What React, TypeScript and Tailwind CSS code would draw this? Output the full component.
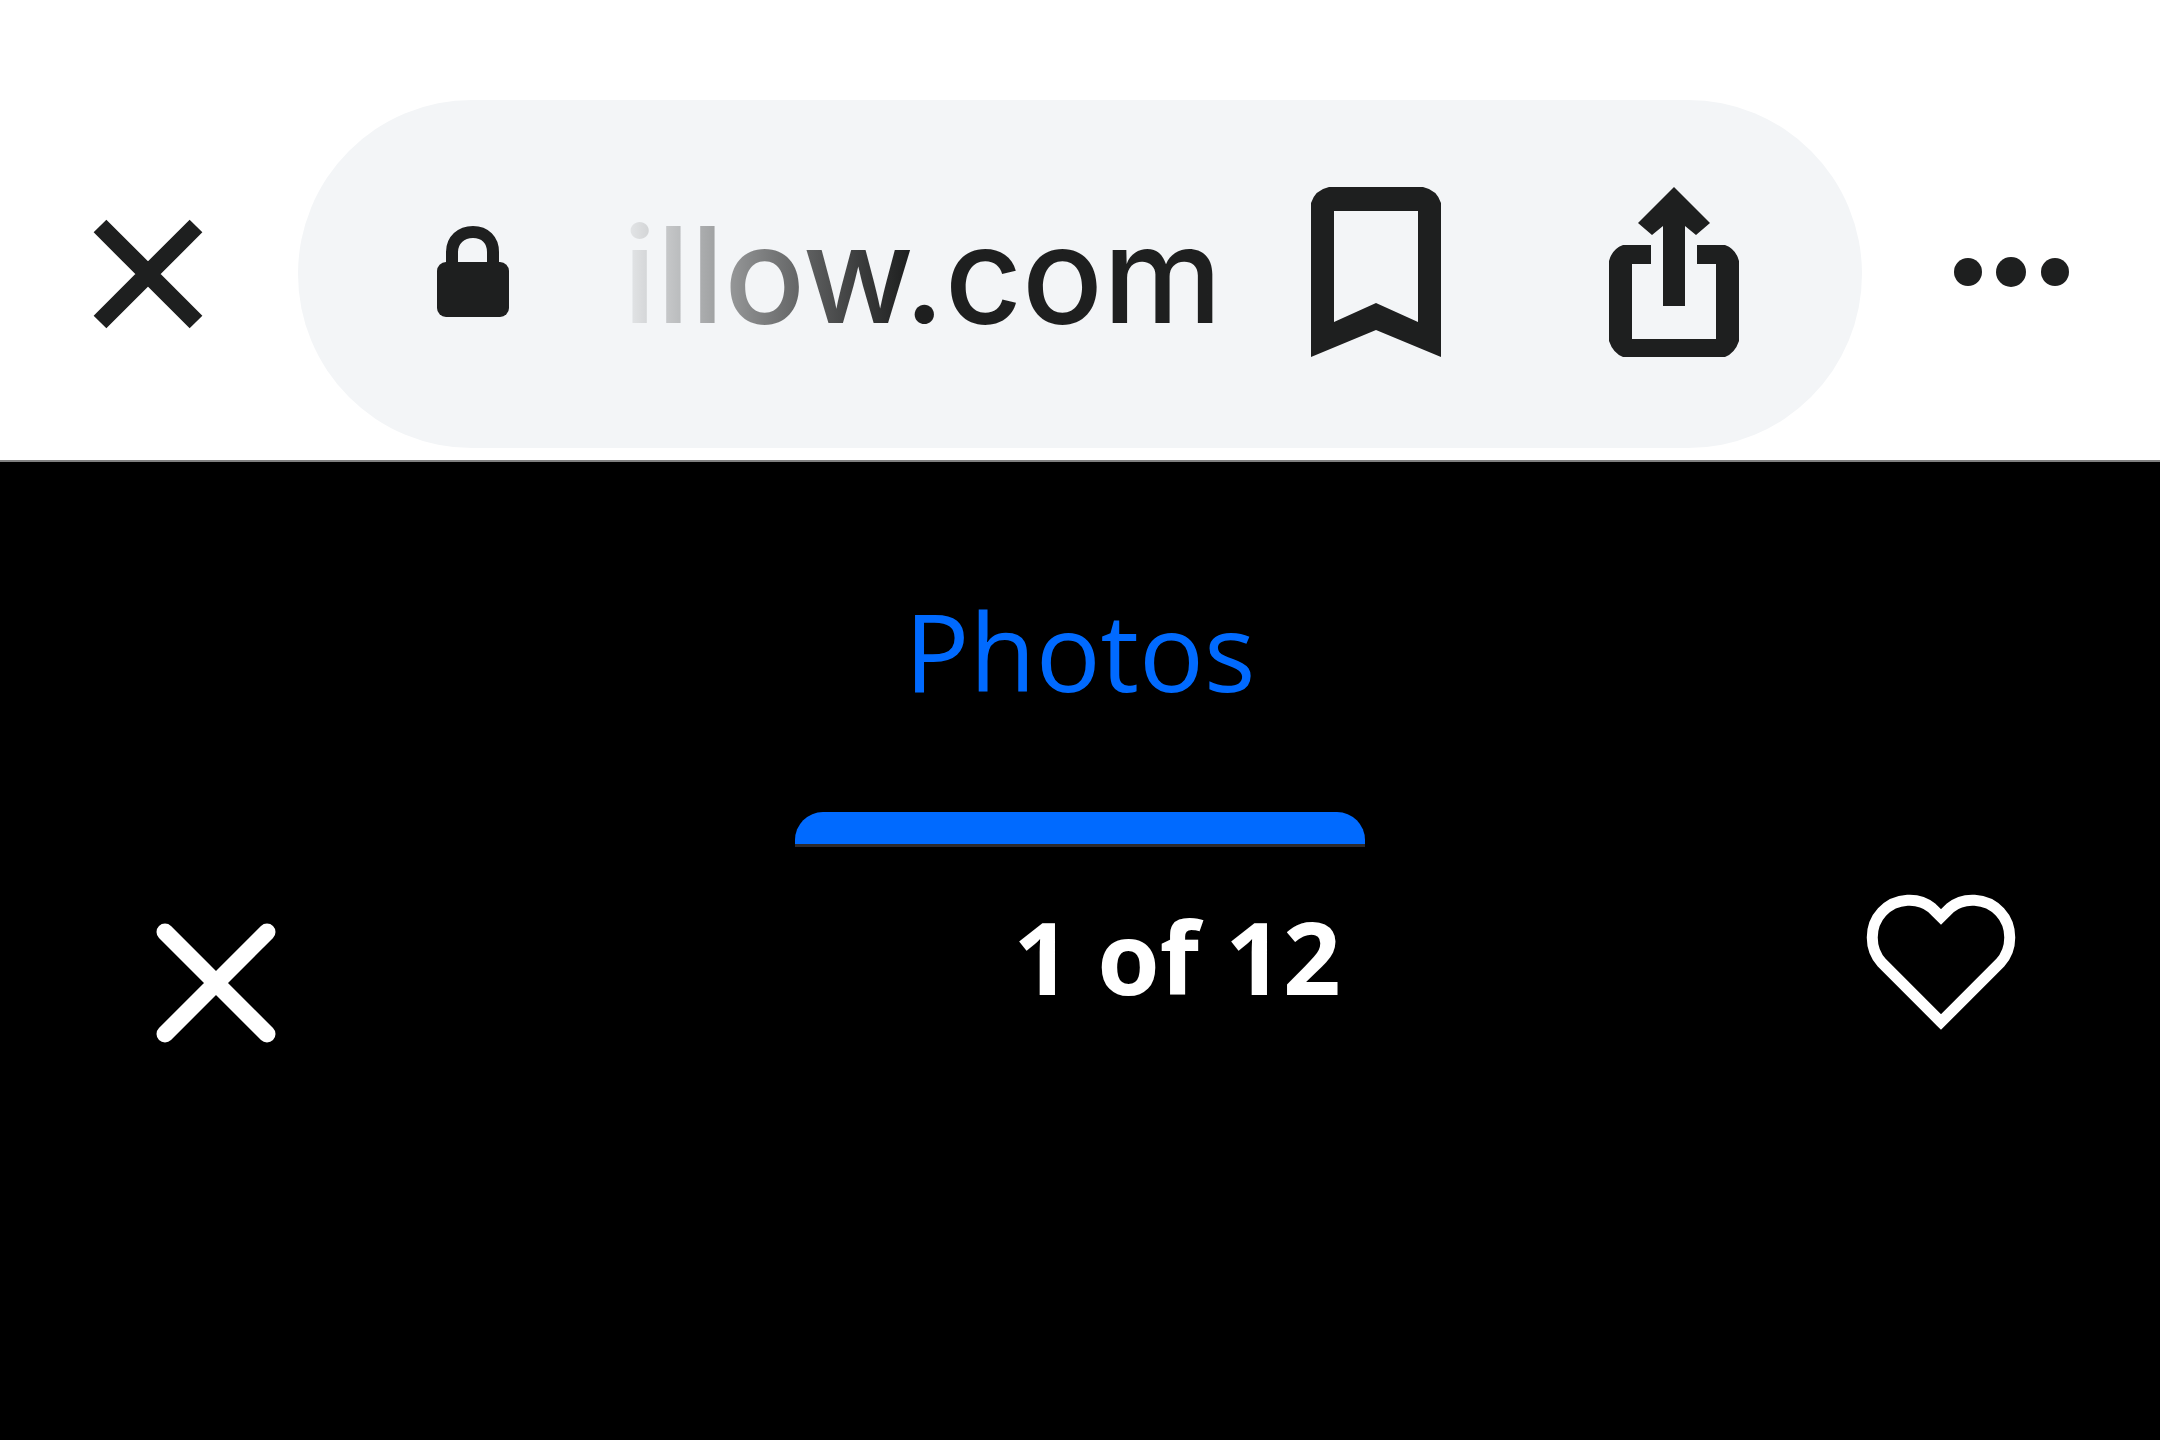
import { useState } from "react";

const CloseIcon = () => (
  <svg className="w-[116px] h-[116px]" viewBox="0 0 116 116" fill="none" stroke="currentColor" strokeWidth={18}>
    <path d="M10 10L106 106M106 10L10 106" />
  </svg>
);

const LockIcon = () => (
  <svg className="w-[72px] h-[92px] shrink-0" viewBox="0 0 72 92" fill="none">
    <rect x="0" y="36" width="72" height="55" rx="9" fill="currentColor" />
    <path d="M15 40V26C15 14 24 6 36 6C48 6 56 14 56 26V40" stroke="currentColor" strokeWidth={12} />
  </svg>
);

const BookmarkIcon = () => (
  <svg className="w-[130px] h-[170px]" viewBox="0 0 130 170" fill="currentColor">
    <path
      fillRule="evenodd"
      d="M18 0H112Q126 3 130 16V170L65 143L0 170V16Q4 3 18 0ZM23 24V135L65 116L107 135V24Z"
    />
  </svg>
);

const ShareIcon = () => (
  <svg className="w-[130px] h-[170px]" viewBox="0 0 130 170" fill="currentColor">
    <path d="M65 0L101 36L87 48L76 39V119H54V39L43 48L29 36Z" />
    <path d="M42 58V77H23V152H107V77H88V58H116Q127 62 130 74V154Q126 166 116 170H14Q4 166 0 154V74Q3 62 14 58Z" />
  </svg>
);

const MoreIcon = () => (
  <svg className="w-[116px] h-[30px]" viewBox="0 0 116 30" fill="currentColor">
    <circle cx="14" cy="15" r="14" />
    <circle cx="57" cy="15" r="15" />
    <circle cx="101" cy="15" r="14" />
  </svg>
);

const HeartIcon = ({ filled }: { filled: boolean }) => (
  <svg
    className="w-[150px] h-[138px]"
    viewBox="0 0 150 138"
    fill={filled ? "currentColor" : "none"}
    stroke="currentColor"
    strokeWidth={11}
  >
    <path d="M75 128L16 69C3 55 3 32 16 18C30 3 53 3 66 14L75 23L84 14C97 3 120 3 134 18C147 32 147 55 134 69Z" />
  </svg>
);

const BrowserBar = () => (
  <header className="flex items-center gap-[92px] px-[90px] pt-[100px] pb-[12px] bg-white border-b-2 border-[#808080] text-[#1e1f1f]">
    <button type="button" aria-label="Close tab" className="shrink-0">
      <CloseIcon />
    </button>

    <div className="flex flex-1 items-center h-[348px] pb-1 pl-[139px] pr-[123px] rounded-full bg-[#f3f5f7]">
      <LockIcon />
      {/* The start of the address fades out */}
      <span className="flex-1 pt-1 pr-[89px] text-right font-['Inter',sans-serif] font-medium text-[134px] leading-[160px] whitespace-nowrap text-transparent bg-clip-text bg-linear-to-r from-[#f3f5f7] from-[100px] to-[#1e1f1f] to-[400px]">
        illow.com
      </span>
      <div className="flex items-center gap-[168px] shrink-0">
        <button type="button" aria-label="Bookmark">
          <BookmarkIcon />
        </button>
        <button type="button" aria-label="Share">
          <ShareIcon />
        </button>
      </div>
    </div>

    <button type="button" aria-label="More" className="shrink-0 pb-1">
      <MoreIcon />
    </button>
  </header>
);

export default function App() {
  const [saved, setSaved] = useState(false);

  return (
    <div className="min-h-screen bg-black font-['Open_Sans',sans-serif]">
      <BrowserBar />

      <main>
        <nav className="flex justify-center pt-[115px]">
          <button type="button" className="flex flex-col items-center w-[570px] text-[#006aff]">
            <span className="text-[108px] leading-[148px]">Photos</span>
            <span className="w-full h-[35px] mt-[87px] rounded-t-[28px] bg-[#006aff] border-b-3 border-[#2d2a2c]" />
          </button>
        </nav>

        <div className="flex items-start pt-[47px] pl-[156px] pr-[144px]">
          <button type="button" aria-label="Close photos" className="pt-[29px] text-white">
            <svg className="w-[120px] h-[120px]" viewBox="0 0 120 120" fill="none" stroke="currentColor" strokeWidth={17} strokeLinecap="round">
              <path d="M9 9L111 111M111 9L9 111" />
            </svg>
          </button>
          <p className="flex-1 pl-[212px] text-center text-white font-bold text-[101px] leading-[124px]">1 of 12</p>
          <button type="button" aria-label="Save home" aria-pressed={saved} onClick={() => setSaved(!saved)} className="text-white">
            <HeartIcon filled={saved} />
          </button>
        </div>
      </main>
    </div>
  );
}
